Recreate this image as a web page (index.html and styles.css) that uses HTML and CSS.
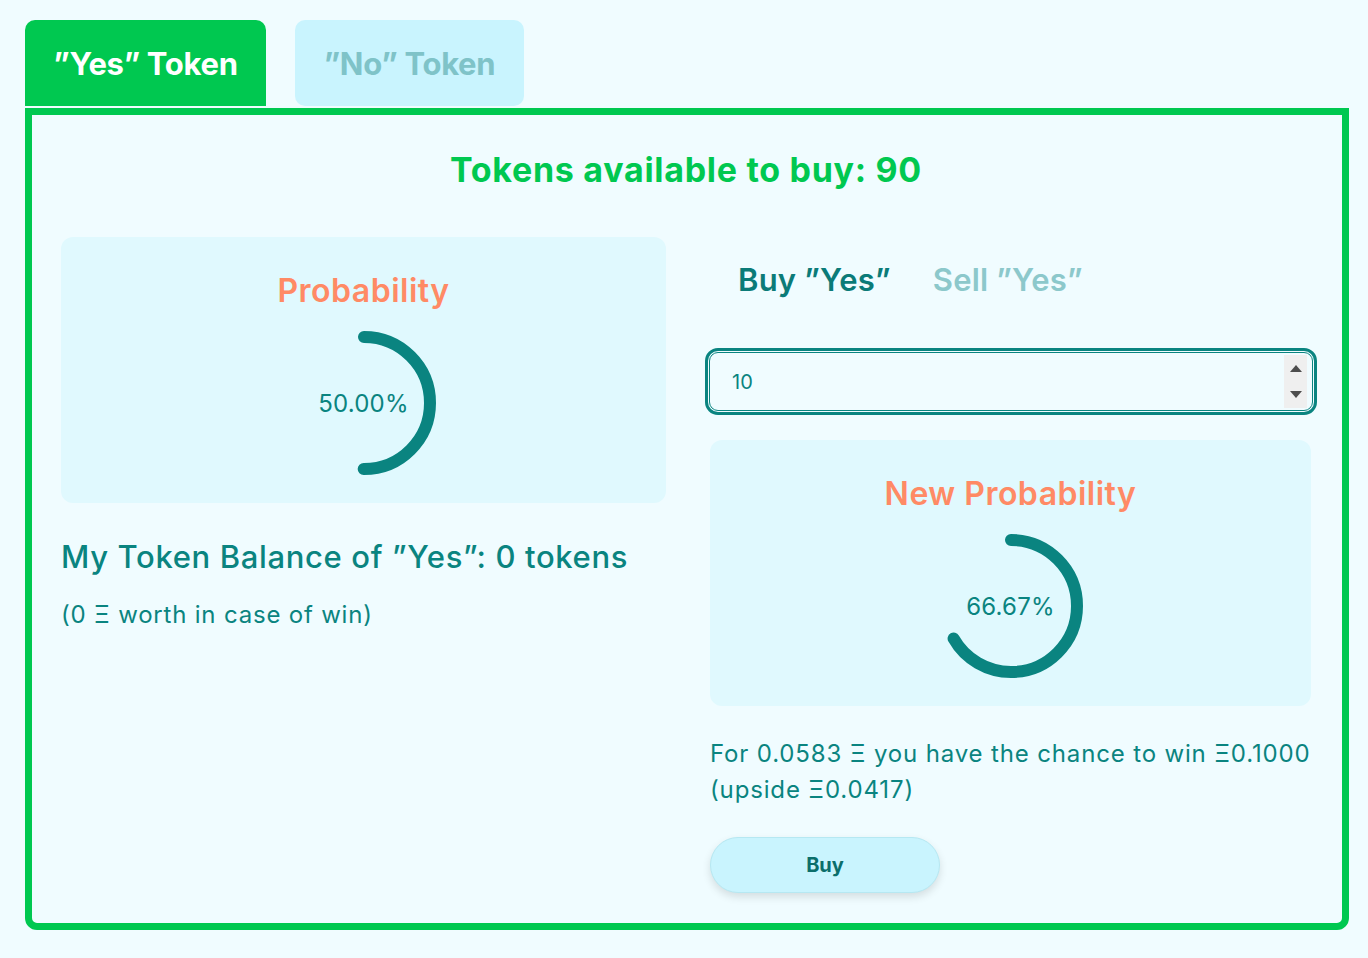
FILE: index.html
```html
<!DOCTYPE html>
<html lang="en">
<head>
<meta charset="utf-8">
<title>Tokens</title>
<link rel="stylesheet" href="styles.css">
</head>
<body>
<div class="wrap">
  <div class="tabs">
    <div class="tab tab-active">”Yes” Token</div>
    <div class="tab tab-idle">”No” Token</div>
  </div>
  <div class="panel">
    <h1 class="avail">Tokens available to buy: 90</h1>
    <div class="cols">
      <div class="col">
        <div class="card">
          <div class="card-title">Probability</div>
          <div class="gauge">
            <svg width="144" height="144" viewBox="0 0 144 144">
              <circle cx="72" cy="72" r="66" fill="none" stroke="#0a8480" stroke-width="12" stroke-linecap="round" stroke-dasharray="207.35 1000" transform="rotate(-90 72 72)"/>
            </svg>
            <span class="gauge-val">50.00%</span>
          </div>
        </div>
        <div class="balance">My Token Balance of ”Yes”: 0 tokens</div>
        <div class="worth">(0 Ξ worth in case of win)</div>
      </div>
      <div class="col">
        <div class="mode">
          <span class="mode-on">Buy ”Yes”</span>
          <span class="mode-off">Sell ”Yes”</span>
        </div>
        <div class="field">
          <input class="amount" type="number" value="10">
          <span class="spin"><span class="up"></span><span class="down"></span></span>
        </div>
        <div class="card">
          <div class="card-title">New Probability</div>
          <div class="gauge">
            <svg width="144" height="144" viewBox="0 0 144 144">
              <circle cx="72" cy="72" r="66" fill="none" stroke="#0a8480" stroke-width="12" stroke-linecap="round" stroke-dasharray="276.46 1000" transform="rotate(-90 72 72)"/>
            </svg>
            <span class="gauge-val">66.67%</span>
          </div>
        </div>
        <p class="chance">For 0.0583 Ξ you have the chance to win Ξ0.1000 (upside Ξ0.0417)</p>
        <button class="buy">Buy</button>
      </div>
    </div>
  </div>
</div>
</body>
</html>
```
FILE: styles.css
```css
* { box-sizing: border-box; }
html, body { margin: 0; padding: 0; background: #f0fcff; }
body {
  font-family: "Inter", "Open Sans", "DejaVu Sans", sans-serif;
  color: #0a8480;
}
.wrap {
  width: 1324px;
  margin: 20px 0 0 25px;
}
.tabs {
  display: flex;
  gap: 29px;
  height: 86px;
  margin-bottom: 2px;
}
.tab {
  display: flex;
  align-items: center;
  justify-content: center;
  font-size: 31px;
  font-weight: 700;
  letter-spacing: -0.3px;
}
.tab-active {
  width: 241px;
  background: #00c850;
  color: #ffffff;
  border-radius: 10px 10px 0 0;
}
.tab-idle {
  width: 229px;
  background: #c9f4fe;
  color: #7fc3c8;
  border-radius: 10px;
}
.panel {
  border: 7px solid #00c850;
  border-radius: 0 0 12px 12px;
  padding: 35px 31px 30px 29px;
  height: 822px;
}
.avail {
  margin: 0;
  text-align: center;
  font-size: 34px;
  line-height: 40px;
  font-weight: 700;
  color: #00c850;
  letter-spacing: 0.7px;
}
.cols {
  margin-top: 47px;
  display: grid;
  grid-template-columns: 605px 601px;
  column-gap: 44px;
  align-items: start;
}
.col { display: flex; flex-direction: column; align-items: flex-start; }
.card {
  width: 100%;
  background: #e0f9fe;
  border-radius: 12px;
  padding: 36px 0 28px;
  display: flex;
  flex-direction: column;
  align-items: center;
}
.card-title {
  font-size: 32px;
  line-height: 36px;
  font-weight: 600;
  color: #ff8a65;
  letter-spacing: 0.5px;
}
.gauge {
  margin-top: 22px;
  width: 144px;
  height: 144px;
  position: relative;
}
.gauge svg { display: block; }
.gauge-val {
  position: absolute;
  inset: 0;
  display: flex;
  align-items: center;
  justify-content: center;
  font-size: 24px;
  letter-spacing: 0.2px;
  color: #0a8480;
}
.balance {
  margin-top: 34px;
  font-size: 31px;
  line-height: 40px;
  font-weight: 500;
  color: #0a8480;
  letter-spacing: 0.65px;
}
.worth {
  margin-top: 20px;
  font-size: 24px;
  line-height: 36px;
  letter-spacing: 0.8px;
}
.mode {
  display: flex;
  gap: 42px;
  padding: 22px 28px;
  font-size: 31px;
  line-height: 42px;
  font-weight: 600;
  letter-spacing: 0.2px;
}
.mode-on { color: #0b7b78; }
.mode-off { color: #8cc8cb; }
.field {
  margin-top: 29px;
  position: relative;
  width: 604px;
  margin-left: -1px;
}
.amount {
  display: block;
  width: 604px;
  height: 59px;
  border: 1px solid #0a8480;
  outline: 3px solid #0a8480;
  outline-offset: 1px;
  border-radius: 9px;
  background: #f0fcff;
  padding: 0 60px 0 22px;
  font-family: inherit;
  font-size: 20px;
  color: #0a8480;
  -moz-appearance: textfield;
}
.amount::-webkit-outer-spin-button,
.amount::-webkit-inner-spin-button { -webkit-appearance: none; margin: 0; }
.spin {
  position: absolute;
  right: 6px;
  top: 3px;
  bottom: 3px;
  width: 23px;
  background: #efefef;
  display: flex;
  flex-direction: column;
  align-items: center;
  justify-content: space-around;
}
.up, .down {
  width: 0; height: 0;
  border-left: 6px solid transparent;
  border-right: 6px solid transparent;
}
.up { border-bottom: 7px solid #4d4d4d; }
.down { border-top: 7px solid #4d4d4d; }
.field + .card { margin-top: 29px; }
.chance {
  margin: 30px 0 0;
  font-size: 24px;
  line-height: 36px;
  letter-spacing: 0.85px;
  color: #0a8480;
}
.buy {
  margin-top: 29px;
  width: 230px;
  height: 56px;
  border-radius: 28px;
  border: 1px solid #b6e8f2;
  background: #c9f4fe;
  box-shadow: 0 4px 8px rgba(0, 0, 0, 0.12);
  font-family: inherit;
  font-size: 20px;
  font-weight: 700;
  color: #0b6e6b;
}
```
